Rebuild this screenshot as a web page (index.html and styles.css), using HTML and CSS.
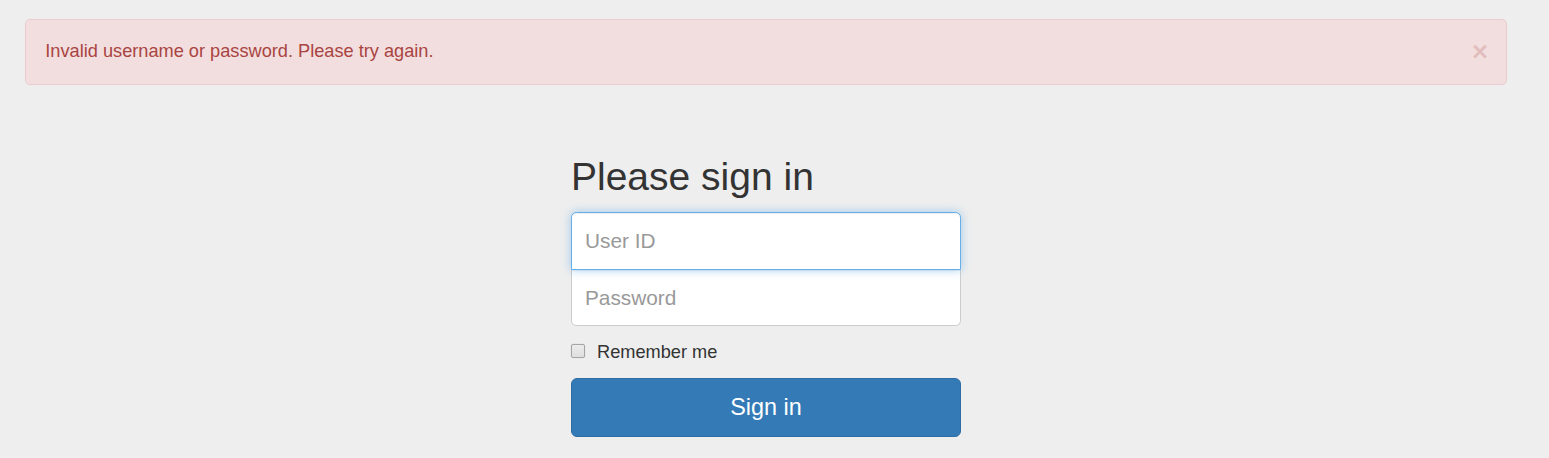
FILE: index.html
```html
<!DOCTYPE html>
<html lang="en">
<head>
<meta charset="utf-8">
<title>Please sign in</title>
<link rel="stylesheet" href="styles.css">
</head>
<body>
<div class="container">
  <div class="alert">
    <button type="button" class="close" aria-label="Close">&times;</button>
    Invalid username or password. Please try again.
  </div>
  <form class="form-signin">
    <h2 class="form-signin-heading">Please sign in</h2>
    <input type="text" class="form-control field-top" placeholder="User ID">
    <input type="password" class="form-control field-bottom" placeholder="Password">
    <div class="checkbox">
      <label><input type="checkbox" class="check"> Remember me</label>
    </div>
    <button class="btn-primary" type="button">Sign in</button>
  </form>
</div>
</body>
</html>
```

FILE: styles.css
```css
* { box-sizing: border-box; }

html, body {
  margin: 0;
  padding: 0;
}

body {
  background: #eeeeee;
  font-family: "Liberation Sans", Arial, Helvetica, sans-serif;
  font-size: 18.2px;
  line-height: 1.42857;
  color: #333333;
}

.container {
  padding: 19px 42px 40px 25px;
}

.alert {
  position: relative;
  background: #f2dede;
  border: 1px solid #ebccd1;
  color: #a94442;
  border-radius: 5px;
  padding: 19.3px 45px 19.3px 19.3px;
  line-height: 25.7px;
  margin-bottom: 25.7px;
}

.close {
  float: right;
  position: relative;
  top: -1.5px;
  right: -27px;
  background: transparent;
  border: 0;
  padding: 0;
  cursor: pointer;
  font-family: "Liberation Sans", Arial, sans-serif;
  font-size: 27.3px;
  font-weight: bold;
  line-height: 1;
  color: inherit;
  opacity: 0.2;
  text-shadow: 0 1px 0 #fff;
}

.form-signin {
  max-width: 390px;
  margin: 0 auto;
}

.form-signin-heading {
  margin: 0 0 13px;
  padding-top: 45px;
  font-size: 39px;
  font-weight: 500;
  line-height: 1.1;
  color: #333;
}

.form-control {
  display: block;
  width: 100%;
  height: auto;
  padding: 13px;
  font-family: "Liberation Sans", Arial, sans-serif;
  font-size: 20.8px;
  line-height: 1.42857;
  color: #555;
  background: #fff;
  border: 1px solid #cccccc;
  border-radius: 5.2px;
  box-shadow: inset 0 1px 1px rgba(0,0,0,.075);
  outline: none;
  position: relative;
}

.form-control::placeholder { color: #999; }

.field-top {
  margin-bottom: -1px;
  border-bottom-left-radius: 0;
  border-bottom-right-radius: 0;
  border-color: #66afe9;
  box-shadow: inset 0 1px 1px rgba(0,0,0,.075), 0 0 10px rgba(102,175,233,.6);
  z-index: 2;
}

.field-bottom {
  border-top-left-radius: 0;
  border-top-right-radius: 0;
  margin-bottom: 13px;
}

.checkbox {
  margin: 0 0 13px;
  min-height: 26px;
}

.checkbox label {
  display: block;
  position: relative;
  padding-left: 26px;
  font-weight: normal;
  cursor: pointer;
}

.check {
  position: absolute;
  left: 0;
  top: 5px;
  width: 14px;
  height: 14px;
  margin: 0;
  appearance: none;
  -webkit-appearance: none;
  background: linear-gradient(#ececec, #dedede);
  border: 1px solid #a5a5a5;
  border-radius: 2px;
  box-shadow: 0 0 1px rgba(0,0,0,.25);
}

.btn-primary {
  display: block;
  width: 100%;
  padding: 13px 20.8px;
  font-family: "Liberation Sans", Arial, sans-serif;
  font-size: 23.4px;
  line-height: 1.3333;
  color: #fff;
  background: #337ab7;
  border: 1px solid #2e6da4;
  border-radius: 6px;
  cursor: pointer;
}
```
